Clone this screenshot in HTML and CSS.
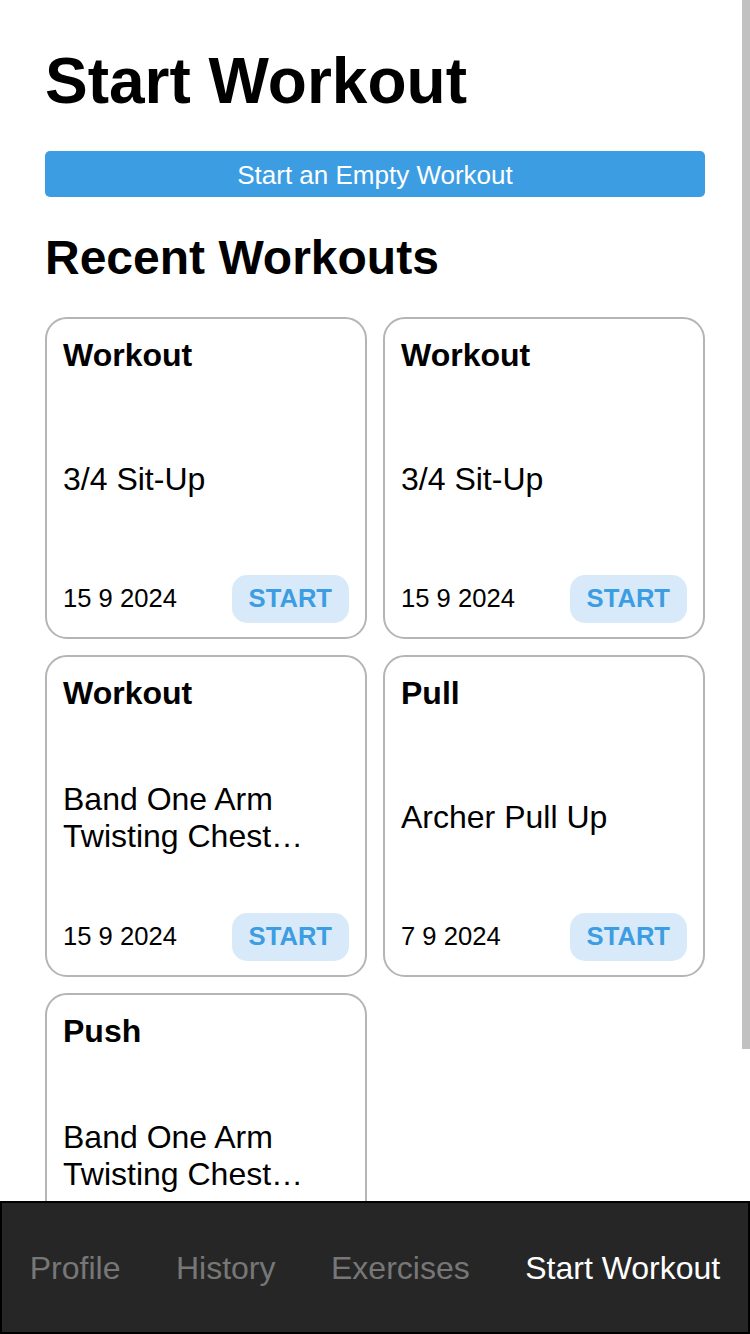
FILE: index.html
```html
<!DOCTYPE html>
<html lang="en">
<head>
<meta charset="utf-8">
<title>Start Workout</title>
<link rel="stylesheet" href="styles.css">
</head>
<body>
<div class="app">
  <main class="scroll">
    <h1 class="page-title">Start Workout</h1>
    <button class="empty-btn">Start an Empty Workout</button>
    <h2 class="section-title">Recent Workouts</h2>
    <div class="grid">
      <div class="card">
        <div class="card-title">Workout</div>
        <div class="card-body">3/4 Sit-Up</div>
        <div class="card-foot"><span class="date">15 9 2024</span><button class="start-btn">START</button></div>
      </div>
      <div class="card">
        <div class="card-title">Workout</div>
        <div class="card-body">3/4 Sit-Up</div>
        <div class="card-foot"><span class="date">15 9 2024</span><button class="start-btn">START</button></div>
      </div>
      <div class="card">
        <div class="card-title">Workout</div>
        <div class="card-body">Band One Arm Twisting Chest Press</div>
        <div class="card-foot"><span class="date">15 9 2024</span><button class="start-btn">START</button></div>
      </div>
      <div class="card">
        <div class="card-title">Pull</div>
        <div class="card-body">Archer Pull Up</div>
        <div class="card-foot"><span class="date">7 9 2024</span><button class="start-btn">START</button></div>
      </div>
      <div class="card">
        <div class="card-title">Push</div>
        <div class="card-body">Band One Arm Twisting Chest Press</div>
        <div class="card-foot"><span class="date">1 9 2024</span><button class="start-btn">START</button></div>
      </div>
    </div>
    <div class="scroll-thumb" aria-hidden="true"></div>
  </main>
  <nav class="tabbar">
    <span class="tab">Profile</span>
    <span class="tab">History</span>
    <span class="tab">Exercises</span>
    <span class="tab active">Start Workout</span>
  </nav>
</div>
</body>
</html>
```

FILE: styles.css
```css
html, body {
  margin: 0;
  padding: 0;
  background: #fff;
}

body {
  font-family: "Liberation Sans", Arial, Helvetica, sans-serif;
  color: #000;
}

.app {
  height: 100vh;
  display: flex;
  flex-direction: column;
  overflow: hidden;
}

.scroll {
  flex: 1;
  min-height: 0;
  overflow: hidden;
  position: relative;
  padding: 45px 45px 0 45px;
}

.scroll-thumb {
  position: absolute;
  top: 0;
  right: 0;
  width: 8px;
  height: 1049px;
  background: #c1c1c1;
}

.page-title {
  margin: 0;
  font-size: 64px;
  line-height: 1.15;
  font-weight: 700;
}

.empty-btn {
  display: block;
  width: 100%;
  margin-top: 32px;
  height: 46px;
  border: none;
  border-radius: 5px;
  background: #3d9de2;
  color: #fff;
  font-family: inherit;
  font-size: 26px;
  line-height: 30px;
  padding: 2px 0 0 0;
}

.section-title {
  margin: 33px 0 0 0;
  font-size: 48px;
  line-height: 1.15;
  font-weight: 700;
}

.grid {
  margin-top: 32px;
  display: grid;
  grid-template-columns: 1fr 1fr;
  gap: 16px;
}

.card {
  aspect-ratio: 1 / 1;
  box-sizing: border-box;
  border: 2px solid #b5b5b5;
  border-radius: 22px;
  padding: 18px 16px 14px 16px;
  display: grid;
  grid-template-rows: 1fr auto 1fr;
}

.card-title {
  align-self: start;
  font-size: 32px;
  line-height: 1.15;
  font-weight: 700;
}

.card-body {
  font-size: 32px;
  line-height: 1.15;
  display: -webkit-box;
  -webkit-box-orient: vertical;
  -webkit-line-clamp: 2;
  overflow: hidden;
}

.card-foot {
  align-self: end;
  display: flex;
  justify-content: space-between;
  align-items: center;
}

.date {
  font-size: 25.6px;
  line-height: 1.15;
}

.start-btn {
  border: none;
  background: #d8eaf9;
  color: #3d9de2;
  font-family: inherit;
  font-weight: 700;
  font-size: 25.6px;
  line-height: 1.15;
  padding: 9px 17px;
  border-radius: 15px;
}

.tabbar {
  flex: none;
  height: 133px;
  box-sizing: border-box;
  border: 2px solid #000;
  background: #262626;
  display: flex;
  justify-content: space-around;
  align-items: center;
  padding-top: 2px;
}

.tab {
  font-size: 32px;
  line-height: 1.15;
  color: #777;
}

.tab.active {
  color: #fff;
}
```
